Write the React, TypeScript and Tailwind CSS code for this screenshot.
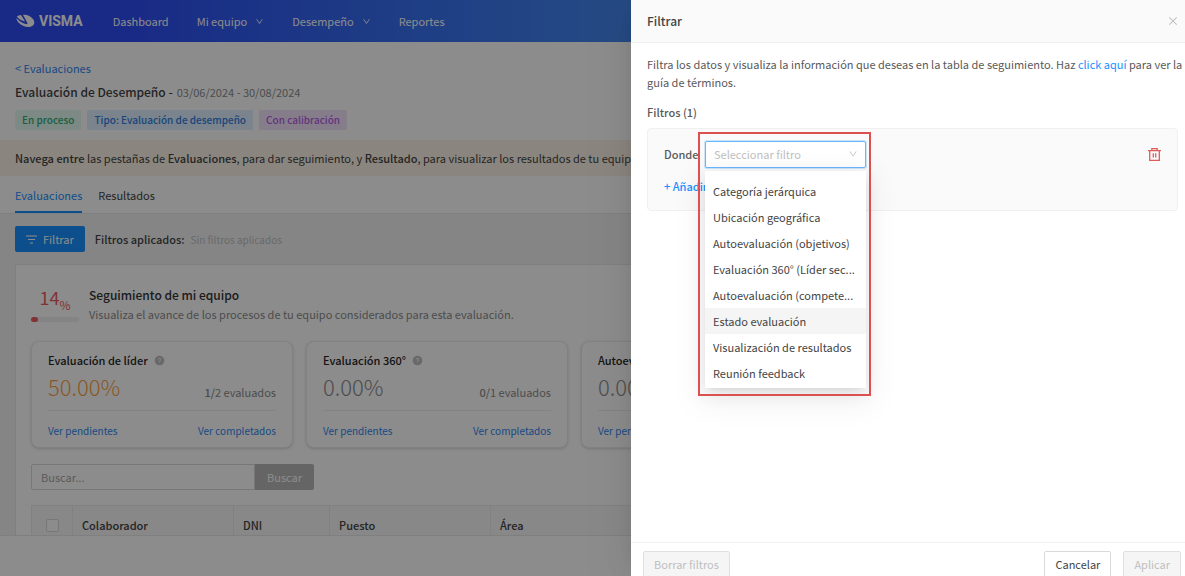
import { useState } from 'react'
import { AiFillQuestionCircle, AiOutlineClose, AiOutlineDown } from 'react-icons/ai'

type Stat = {
  title: string
  percent: string
  done: number
  total: number
  color: string
}

const navItems = [
  { label: 'Dashboard', menu: false },
  { label: 'Mi equipo', menu: true },
  { label: 'Desempeño', menu: true },
  { label: 'Reportes', menu: false },
]

const stats: Stat[] = [
  { title: 'Evaluación de líder', percent: '50.00%', done: 1, total: 2, color: 'text-[#fa9f43]' },
  { title: 'Evaluación 360°', percent: '0.00%', done: 0, total: 1, color: 'text-[#8c8c8c]' },
  { title: 'Autoevaluación', percent: '0.00%', done: 0, total: 1, color: 'text-[#8c8c8c]' },
]

const filterOptions = [
  'Categoría jerárquica',
  'Ubicación geográfica',
  'Autoevaluación (objetivos)',
  'Evaluación 360° (Líder sec...',
  'Autoevaluación (compete...',
  'Estado evaluación',
  'Visualización de resultados',
  'Reunión feedback',
]

function Logo() {
  return (
    <a href="#" className="flex items-center gap-1 text-white">
      <svg width="19" height="14" viewBox="0 0 19 14" fill="currentColor" aria-hidden="true">
        <path d="M7 .9C11 .4 15 2.300 17.200 5.300c2.200 3.200 1.100 6.500-2.600 7.400-4 1-9-.9-11.900-4C1.100 7 .4 5.300.5 3.900c1.800 2.500 5.300 5 9.200 6.200 1.500.4 2.200-.5 1.500-1.600C10.200 6.400 8.700 3.600 7 .9z" />
        <path d="M.9 2.500C1.800 1.700 3.200 1.200 4.800 1c1.500 1.900 3 4.300 4.200 6.600C5.900 6.800 2.600 4.900.9 2.500z" />
      </svg>
      <span className="font-[Roboto,sans-serif] text-sm leading-none font-bold">VISMA</span>
    </a>
  )
}

function TrashIcon() {
  return (
    <svg width="13" height="13" viewBox="0 0 13 13" fill="none" stroke="currentColor" strokeWidth="1.300" aria-hidden="true">
      <path d="M0 2.600h13M3.800 2.500V.7h5.400v1.800M1.700 2.600v9.700h9.600V2.600M5.300 5.200v4.300M7.700 5.200v4.300" />
    </svg>
  )
}

function StatCard({ stat }: { stat: Stat }) {
  return (
    <article className="w-[262px] shrink-0 rounded-lg border border-[#ececec] bg-white px-4 pt-2 pb-2 shadow-[0_1px_3px_rgba(0,0,0,0.16)]">
      <h3 className="flex items-center gap-1.5 leading-5 font-medium text-[#262626]">
        {stat.title}
        <AiFillQuestionCircle size={11} className="text-[#bfbfbf]" />
      </h3>
      <div className="flex items-end justify-between border-b border-[#eeeeee] pb-2">
        <span className={`text-[22px] leading-8 font-light ${stat.color}`}>{stat.percent}</span>
        <span className="leading-5 text-[#8c8c8c]">
          <b className="font-medium">{stat.done}/</b>
          {stat.total} evaluados
        </span>
      </div>
      <div className="flex justify-between pt-3 text-[10px] leading-4 text-[#2f86f0]">
        <a href="#">Ver pendientes</a>
        <a href="#">Ver completados</a>
      </div>
    </article>
  )
}

function FilterDrawer() {
  const [filter, setFilter] = useState('')

  return (
    <aside className="fixed inset-y-0 right-0 flex w-[554px] max-w-full flex-col overflow-hidden bg-white text-[#595959]">
      <header className="flex h-[43px] shrink-0 items-center justify-between border-b border-[#f0f0f0] bg-[#fafafa] pr-1.5 pl-4">
        <h2 className="text-xs font-medium text-[#434343]">Filtrar</h2>
        <button aria-label="Cerrar" className="text-[#bfbfbf]">
          <AiOutlineClose size={12} />
        </button>
      </header>

      <div className="flex-1 pt-3 pl-4">
        <p className="leading-[18px]">
          Filtra los datos y visualiza la información que deseas en la tabla de seguimiento. Haz{' '}
          <a href="#" className="text-[#1890ff]">click aquí</a> para ver la guía de términos.
        </p>
        <h3 className="mt-[11px] leading-5 font-medium">Filtros (1)</h3>

        <section className="mt-1.5 mr-[7px] rounded-sm border border-[#f0f0f0] bg-[#fafafa] px-4 pt-3 pb-3.5">
          <div className="flex items-center">
            <label htmlFor="filtro" className="w-[41px] font-medium">Donde</label>
            <div className="relative w-[161px]">
              <select
                id="filtro"
                value={filter}
                onChange={(e) => setFilter(e.target.value)}
                className="block h-[27px] w-full appearance-none rounded-xs border border-[#69b8ff] bg-white px-2 text-[#bfbfbf] shadow-[0_0_0_1px_rgba(24,144,255,0.2)] outline-none"
              >
                <option value="">Seleccionar filtro</option>
                {filterOptions.map((option) => (
                  <option key={option}>{option}</option>
                ))}
              </select>
              <AiOutlineDown size={10} className="pointer-events-none absolute top-2 right-2 text-[#bfbfbf]" />

              <ul
                role="listbox"
                className="absolute top-[30px] right-0 left-0 z-10 bg-white pt-[7px] pb-0.5 text-[#434343] shadow-[0_3px_6px_-4px_rgba(0,0,0,0.12),0_6px_16px_rgba(0,0,0,0.08),0_9px_28px_8px_rgba(0,0,0,0.05)]"
              >
                {filterOptions.map((option) => (
                  <li
                    key={option}
                    role="option"
                    aria-selected={filter === option}
                    onClick={() => setFilter(option)}
                    className={`px-2 leading-[26px] whitespace-nowrap ${
                      option === 'Estado evaluación' ? 'bg-[#f5f5f5]' : ''
                    }`}
                  >
                    {option}
                  </li>
                ))}
              </ul>
              <div className="pointer-events-none absolute -top-[9px] -right-[5px] -left-[7px] z-20 h-[264px] border-2 border-[#dc5050]" />
            </div>
            <button aria-label="Eliminar filtro" className="ml-auto text-[#e05c5c]">
              <TrashIcon />
            </button>
          </div>
          <button className="mt-2 block leading-5 font-medium text-[#1890ff]">+ Añadir</button>
        </section>
      </div>

      <footer className="flex h-[34px] shrink-0 items-start gap-3 border-t border-[#f0f0f0] px-1 pt-2 pl-3">
        <button disabled className="h-[27px] shrink-0 rounded-xs border border-[#e0e0e0] bg-[#f5f5f5] px-2.5 text-[#bfbfbf]">
          Borrar filtros
        </button>
        <button className="ml-auto h-[27px] shrink-0 rounded-xs border border-[#d9d9d9] bg-white px-2.5 text-[#434343]">
          Cancelar
        </button>
        <button disabled className="h-[27px] shrink-0 rounded-xs border border-[#e0e0e0] bg-[#f5f5f5] px-2.5 text-[#bfbfbf]">
          Aplicar
        </button>
      </footer>
    </aside>
  )
}

export default function App() {
  return (
    <div className="flex h-screen flex-col overflow-hidden bg-white font-['Noto_Sans_CJK_SC','Open_Sans',sans-serif] text-[11px] text-[#434343]">
      <header className="flex h-[42px] shrink-0 items-center bg-linear-to-r from-[#2f4bf5] from-10% to-[#4a90ee] to-60% pl-4 text-white">
        <Logo />
        <nav className="ml-[30px] flex items-center gap-7">
          {navItems.map(({ label, menu }) => (
            <a key={label} href="#" className="flex items-center gap-2">
              {label}
              {menu && <AiOutlineDown size={9} />}
            </a>
          ))}
        </nav>
      </header>

      <main className="min-h-0 flex-1 overflow-hidden bg-[#f3f3f3]">
        <div className="border-b border-[#e8e8e8] bg-white">
          <div className="px-[15px] pt-4 pb-2.5">
            <a href="#" className="block leading-5 text-[#2f86f0]">&lt; Evaluaciones</a>
            <div className="mt-1 flex items-center gap-1 leading-5">
              <h1 className="text-xs font-medium">Evaluación de Desempeño -</h1>
              <span className="text-[#8c8c8c]">03/06/2024 - 30/08/2024</span>
            </div>
            <div className="mt-2 flex gap-1.5 text-[10px] leading-5 font-medium">
              <span className="rounded-xs bg-[#e3f9f0] px-[7px] text-[#2fae78]">En proceso</span>
              <span className="rounded-xs bg-[#e0efff] px-[7px] text-[#2f80e0]">Tipo: Evaluación de desempeño</span>
              <span className="rounded-xs bg-[#f3e3fc] px-[7px] text-[#b45fe6]">Con calibración</span>
            </div>
          </div>
          <p className="bg-[#fcf3e6] px-[15px] py-2 leading-5 whitespace-nowrap">
            <b className="font-medium">Navega entre</b> las pestañas de <b className="font-medium">Evaluaciones</b>,
            para dar seguimiento, y <b className="font-medium">Resultado</b>, para visualizar los resultados de tu
            equipo y
          </p>
          <nav className="flex gap-4 px-[15px] pt-[9px]">
            <a href="#" className="border-b-2 border-[#1890ff] pb-1.5 leading-5 text-[#1890ff]">Evaluaciones</a>
            <a href="#" className="leading-5">Resultados</a>
          </nav>
        </div>

        <div className="px-[15px] pt-3">
          <div className="flex items-center gap-2.5">
            <button className="flex h-[26px] items-center gap-1.5 rounded-xs bg-[#1890ff] px-[11px] text-white">
              <svg width="11" height="9" viewBox="0 0 11 9" stroke="currentColor" strokeWidth="1.200" aria-hidden="true">
                <path d="M0 1h11M2 4.500h7M4 8h3" />
              </svg>
              Filtrar
            </button>
            <b className="font-medium">Filtros aplicados:</b>
            <span className="-ml-1 text-[10px] text-[#bfbfbf]">Sin filtros aplicados</span>
          </div>

          <div className="mt-3 overflow-hidden border border-[#e8e8e8] bg-white px-[15px] pt-5">
            <div className="flex gap-2.5">
              <div className="w-12">
                <div className="text-center text-lg leading-6 text-[#ee5a5f]">
                  14<span className="align-sub text-xs leading-none">%</span>
                </div>
                <div className="mt-1.5 h-[5px] rounded-full bg-[#f0f0f0]">
                  <div className="h-full w-[14%] rounded-full bg-[#ee5a5f]" />
                </div>
              </div>
              <div>
                <h2 className="text-xs leading-5 font-medium text-[#333333]">Seguimiento de mi equipo</h2>
                <p className="leading-[18px] text-[#8c8c8c]">
                  Visualiza el avance de los procesos de tu equipo considerados para esta evaluación.
                </p>
              </div>
            </div>

            <div className="mt-[18px] flex gap-[13px]">
              {stats.map((stat) => (
                <StatCard key={stat.title} stat={stat} />
              ))}
            </div>

            <form className="mt-4 flex">
              <input
                type="text"
                aria-label="Buscar"
                placeholder="Buscar..."
                className="h-[26px] w-56 rounded-l-xs border border-[#d9d9d9] px-[9px] outline-none placeholder:text-[#a6a6a6]"
              />
              <button type="button" className="h-[26px] rounded-r-xs bg-[#b8b8b8] px-3 text-white">Buscar</button>
            </form>

            <table className="mt-[15px] w-full table-fixed border border-[#ebebeb] bg-[#f7f7f7] text-left">
              <thead>
                <tr className="h-10">
                  <th className="w-[41px] border-r border-[#ebebeb]">
                    <input
                      type="checkbox"
                      aria-label="Seleccionar todo"
                      className="mx-auto block size-[13px] appearance-none rounded-xs border border-[#d9d9d9] bg-white"
                    />
                  </th>
                  <th className="w-[161px] border-r border-[#ebebeb] px-[9px] font-medium">Colaborador</th>
                  <th className="w-24 border-r border-[#ebebeb] px-[9px] font-medium">DNI</th>
                  <th className="w-[161px] border-r border-[#ebebeb] px-[9px] font-medium">Puesto</th>
                  <th className="px-[9px] font-medium">Área</th>
                </tr>
              </thead>
            </table>
          </div>
        </div>
      </main>

      <footer className="h-[41px] shrink-0 border-t border-[#e8e8e8] bg-white" />

      <div className="fixed inset-0 bg-black/45" />
      <div className="fixed inset-y-0 right-0 w-[554px] max-w-full shadow-[-6px_0_16px_-8px_rgba(0,0,0,0.08),-9px_0_28px_rgba(0,0,0,0.05),-12px_0_48px_16px_rgba(0,0,0,0.03)]" />
      <FilterDrawer />
    </div>
  )
}
